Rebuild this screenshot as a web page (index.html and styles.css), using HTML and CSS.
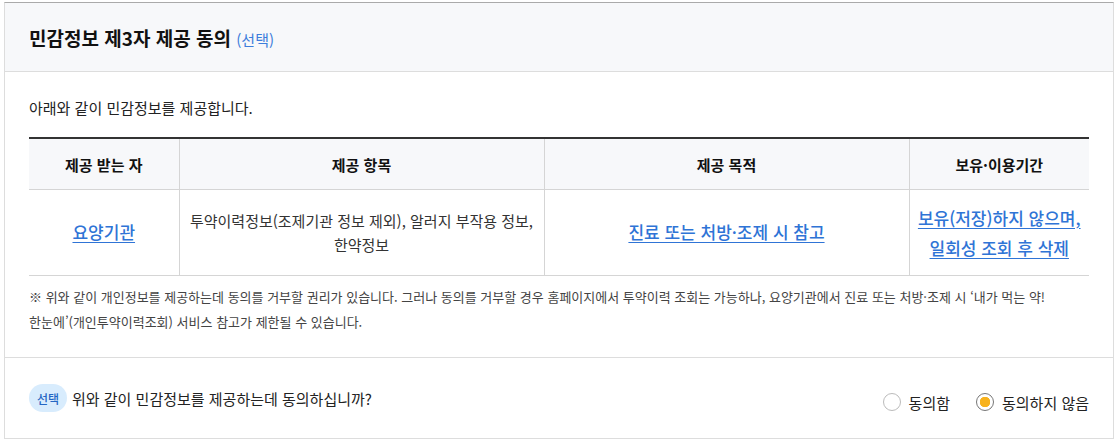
FILE: index.html
```html
<!DOCTYPE html>
<html lang="ko">
<head>
    <meta charset="UTF-8">
    <meta name="viewport" content="width=device-width, initial-scale=1.0">
    <title>민감정보 제3자 제공 동의</title>
    <link rel="stylesheet" href="styles.css">
</head>
<body>
    <div class="agree-box">
        <div class="agree-head">
            <h2>민감정보 제3자 제공 동의 <span class="opt">(선택)</span></h2>
        </div>

        <div class="agree-body">
            <p class="intro">아래와 같이 민감정보를 제공합니다.</p>

            <table class="agree-table">
                <colgroup>
                    <col style="width:150px">
                    <col style="width:365px">
                    <col style="width:365px">
                    <col>
                </colgroup>
                <thead>
                    <tr>
                        <th>제공 받는 자</th>
                        <th>제공 항목</th>
                        <th>제공 목적</th>
                        <th>보유·이용기간</th>
                    </tr>
                </thead>
                <tbody>
                    <tr>
                        <td><a href="#" class="em">요양기관</a></td>
                        <td class="items">투약이력정보(조제기관 정보 제외), 알러지 부작용 정보,<br>한약정보</td>
                        <td><a href="#" class="em">진료 또는 처방·조제 시 참고</a></td>
                        <td class="period"><a href="#" class="em">보유(저장)하지 않으며,<br>일회성 조회 후 삭제</a></td>
                    </tr>
                </tbody>
            </table>

            <p class="notice">※ 위와 같이 개인정보를 제공하는데 동의를 거부할 권리가 있습니다. 그러나 동의를 거부할 경우 홈페이지에서 투약이력 조회는 가능하나, 요양기관에서 진료 또는 처방·조제 시 ‘내가 먹는 약!<br>한눈에’(개인투약이력조회) 서비스 참고가 제한될 수 있습니다.</p>
        </div>

        <div class="agree-foot">
            <div class="question">
                <span class="badge">선택</span>
                <span>위와 같이 민감정보를 제공하는데 동의하십니까?</span>
            </div>
            <div class="radios">
                <label class="radio"><input type="radio" name="agree3"><i></i>동의함</label>
                <label class="radio"><input type="radio" name="agree3" checked><i></i>동의하지 않음</label>
            </div>
        </div>
    </div>
</body>
</html>
```

FILE: styles.css
```css
body {
    margin: 0;
    padding: 2px 4px;
    font-family: "Noto Sans CJK KR", "Noto Sans", sans-serif;
    color: #222;
    background-color: #fff;
}
.agree-box {
    width: 1108px;
    border: 1px solid #ddd;
    border-top-color: #aaa;
}
.agree-head {
    height: 68px;
    display: flex;
    align-items: center;
    padding: 0 24px;
    background-color: #f7f8fa;
    border-bottom: 1px solid #ddd;
}
.agree-head h2 {
    margin: 0;
    font-size: 19px;
    font-weight: 700;
    color: #111;
}
.agree-head .opt {
    font-size: 15px;
    font-weight: 400;
    color: #3d7ddb;
}
.agree-body {
    padding: 24px 24px 23px;
    border-bottom: 1px solid #ddd;
}
.intro {
    margin: 0 0 17px;
    font-size: 15px;
    line-height: 24px;
    color: #222;
}
.agree-table {
    width: 100%;
    border-collapse: collapse;
    border-top: 2px solid #333;
    table-layout: fixed;
}
.agree-table th {
    height: 48px;
    font-size: 15px;
    font-weight: 700;
    color: #111;
    background-color: #f7f8fa;
    border-bottom: 1px solid #d5d5d5;
    border-left: 1px solid #d5d5d5;
}
.agree-table td {
    height: 83px;
    text-align: center;
    font-size: 15px;
    line-height: 24px;
    color: #333;
    border-bottom: 1px solid #d5d5d5;
    border-left: 1px solid #d5d5d5;
}
.agree-table th:first-child,
.agree-table td:first-child {
    border-left: none;
}
.agree-table .em {
    font-size: 17px;
    font-weight: 500;
    color: #2f74d6;
    text-decoration: underline;
    text-underline-offset: 3px;
}
.agree-table .period {
    line-height: 29px;
}
.notice {
    margin: 8px 0 0;
    font-size: 13px;
    line-height: 25px;
    color: #444;
}
.agree-foot {
    height: 80px;
    display: flex;
    align-items: center;
    justify-content: space-between;
    padding: 0 24px;
}
.question {
    display: flex;
    align-items: center;
    gap: 5px;
    font-size: 15px;
    color: #222;
}
.badge {
    display: inline-flex;
    align-items: center;
    justify-content: center;
    width: 38px;
    height: 28px;
    border-radius: 14px;
    background-color: #d8ecfd;
    color: #2466c4;
    font-size: 12px;
    font-weight: 500;
}
.radios {
    display: flex;
    gap: 26px;
    margin-top: 8px;
}
.radio {
    display: flex;
    align-items: center;
    gap: 8px;
    font-size: 15px;
    color: #222;
    cursor: pointer;
}
.radio input {
    display: none;
}
.radio i {
    width: 18px;
    height: 18px;
    border: 1px solid #bbb;
    border-radius: 50%;
    background-color: #fff;
    box-sizing: border-box;
}
.radio input:checked + i {
    border-color: #777;
    background: radial-gradient(circle, #f7b21d 0, #f7b21d 5px, #fff 5.5px);
}
```
